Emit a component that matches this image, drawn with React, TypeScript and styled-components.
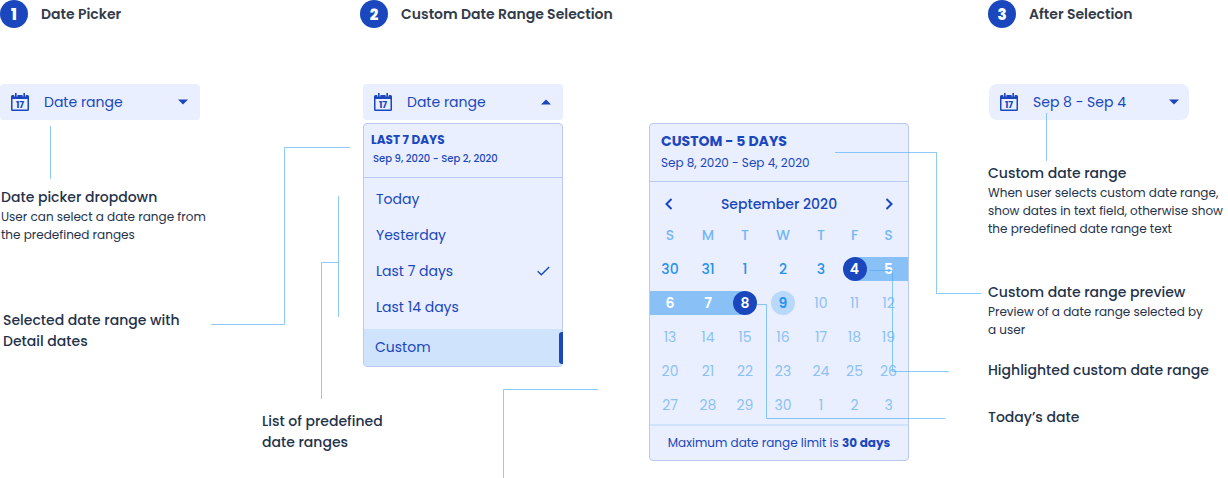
import React from "react";
import styled, { createGlobalStyle, css } from "styled-components";

const color = {
  blue: "#1a47bd",
  panel: "#e9effe",
  panelBorder: "#b9c9f3",
  active: "#cfe3fc",
  band: "#89c1f7",
  ink: "#24324a",
  heading: "#333b4a",
  line: "#42a8fa",
};

const GlobalStyle = createGlobalStyle`
  *, *::before, *::after { box-sizing: border-box; }
  body {
    margin: 0;
    background: #fff;
    color: ${color.ink};
    font-family: Poppins, Inter, "Open Sans", sans-serif;
  }
  button { font: inherit; color: inherit; border: 0; padding: 0; background: none; cursor: pointer; }
  h2, h3, p, ul { margin: 0; padding: 0; }
`;

const Page = styled.main`
  position: relative;
  display: grid;
  grid-template-columns: 360px 628px minmax(236px, 1fr);
  align-items: start;
  min-height: 100vh;
`;

const Column = styled.section`
  min-width: 0;
`;

const StepHeader = styled.header`
  display: flex;
  align-items: center;
  gap: 13px;
  height: 28px;
  margin-bottom: 56px;
`;

const StepBadge = styled.span`
  display: grid;
  place-items: center;
  width: 28px;
  height: 28px;
  border-radius: 50%;
  background: ${color.blue};
  color: #fff;
  font-size: 15px;
  font-weight: 800;
`;

const StepTitle = styled.h2`
  color: ${color.heading};
  font-size: 14px;
  font-weight: 600;
  line-height: 20px;
  white-space: nowrap;
`;

const PickerButton = styled.button<{ $round?: boolean }>`
  display: flex;
  align-items: center;
  width: 200px;
  height: 36px;
  padding: 0 ${(p) => (p.$round ? 10 : 12)}px 0 11px;
  border-radius: ${(p) => (p.$round ? 8 : 4)}px;
  background: ${color.panel};
  color: ${color.blue};
  font-size: 14px;
  text-align: left;
`;

const PickerLabel = styled.span`
  flex: 1;
  margin-left: 15px;
`;

const AppliedPicker = styled.div`
  padding-left: 1px;
`;

const Note = styled.div<{ $top: number; $indent?: number }>`
  margin-top: ${(p) => p.$top}px;
  margin-left: ${(p) => p.$indent ?? 0}px;
  white-space: pre;
`;

const NoteTitle = styled.h3`
  font-size: 14px;
  font-weight: 500;
  line-height: 21px;
`;

const NoteText = styled.p`
  font-size: 12px;
  line-height: 18px;
`;

const Demo = styled.div`
  display: flex;
  align-items: flex-start;
  gap: 86px;
  padding-left: 3px;
`;

const Dropdown = styled.div`
  width: 200px;
`;

const panel = css`
  border: 1px solid ${color.panelBorder};
  border-radius: 4px;
  background: ${color.panel};
  color: ${color.blue};
`;

const Menu = styled.div`
  ${panel}
  margin-top: 3px;
`;

const MenuSummary = styled.div`
  height: 54px;
  padding: 7px 7px 0;
  border-bottom: 1px solid ${color.panelBorder};
`;

const MenuSummaryTitle = styled.h3`
  font-size: 12px;
  font-weight: 700;
  line-height: 18px;
`;

const MenuSummaryDates = styled.p`
  padding-left: 2px;
  font-size: 10px;
  font-weight: 500;
  line-height: 20px;
`;

const OptionList = styled.ul`
  padding: 3px 0 4px;
  list-style: none;
`;

const Option = styled.button`
  display: flex;
  align-items: center;
  justify-content: space-between;
  width: 100%;
  height: 36px;
  padding: 0 12px;
  font-size: 14px;
  text-align: left;
`;

const CustomOption = styled(Option)`
  position: relative;
  height: 37px;
  padding-left: 11px;
  background: ${color.active};
  border-radius: 0 0 3px 3px;

  &::after {
    content: "";
    position: absolute;
    top: 3px;
    right: -1px;
    width: 4px;
    height: 32px;
    border-radius: 3px 0 0 3px;
    background: ${color.blue};
  }
`;

const Calendar = styled.section`
  ${panel}
  width: 260px;
  margin-top: 39px;
`;

const CalendarSummary = styled.header`
  height: 58px;
  padding: 7px 11px 0;
  border-bottom: 1px solid ${color.panelBorder};
`;

const CalendarTitle = styled.h3`
  font-size: 14px;
  font-weight: 700;
  line-height: 20px;
`;

const CalendarDates = styled.p`
  font-size: 12px;
  line-height: 24px;
`;

const MonthBar = styled.div`
  display: flex;
  align-items: center;
  justify-content: space-between;
  height: 36px;
  padding: 8px 13px 0;
  font-size: 14px;
  font-weight: 500;
`;

const MonthButton = styled.button`
  display: grid;
  place-items: center;
  width: 12px;
  height: 20px;
`;

const DayTable = styled.table`
  width: 100%;
  table-layout: fixed;
  border-collapse: collapse;
  font-size: 14px;

  th, td { height: 34px; padding: 0; }
  th { color: #76b7f6; font-weight: 500; }
`;

const DayColumn = styled.col<{ $width: number }>`
  width: ${(p) => p.$width}px;
`;

type DayKind = "muted" | "open" | "range" | "start" | "end" | "today";

const dayColor: Record<DayKind, string> = {
  muted: "#8bc1f6",
  open: "#2a91ee",
  range: "#fff",
  start: "#fff",
  end: "#fff",
  today: "#2a91ee",
};

const bandFill: Partial<Record<DayKind, string>> = {
  range: color.band,
  start: `linear-gradient(to right, transparent 50%, ${color.band} 50%)`,
  end: `linear-gradient(to left, transparent 50%, ${color.band} 50%)`,
};

const dotFill: Partial<Record<DayKind, string>> = {
  start: color.blue,
  end: color.blue,
  today: "#b9d9fb",
};

const DayButton = styled.button<{ $kind: DayKind }>`
  display: flex;
  justify-content: center;
  width: 100%;
  height: 24px;
  background: ${(p) => bandFill[p.$kind] ?? "none"};
  color: ${(p) => dayColor[p.$kind]};
  font-weight: ${(p) => (p.$kind === "muted" ? 400 : p.$kind === "open" ? 500 : 600)};
`;

const DayNumber = styled.span<{ $kind: DayKind }>`
  display: grid;
  place-items: center;
  width: 24px;
  height: 24px;
  border-radius: 50%;
  background: ${(p) => dotFill[p.$kind] ?? "none"};
`;

const CalendarFooter = styled.footer`
  height: 36px;
  margin-top: 2px;
  border-top: 2px solid ${color.active};
  font-size: 12px;
  line-height: 34px;
  text-align: center;

  strong { font-weight: 700; }
`;

const Connectors = styled.svg`
  position: absolute;
  top: 0;
  left: 0;
  pointer-events: none;
`;

const CalendarIcon = () => (
  <svg width="18" height="18" viewBox="0 0 18 18" fill="none" aria-hidden="true">
    <path
      fill={color.blue}
      fillRule="evenodd"
      d="M1.500 2H3.200V3.600H6.400V2H11.600V3.600H14.800V2H16.500Q18 2 18 3.500V16.500Q18 18 16.500 18H1.500Q0 18 0 16.500V3.500Q0 2 1.500 2ZM1.500 6V16.500H16.500V6Z"
    />
    <path stroke={color.blue} strokeWidth="1.600" d="M4.800 0V4M13.200 0V4" />
    <text x="9" y="14.500" fill={color.blue} fontSize="9" fontWeight="700" textAnchor="middle">
      17
    </text>
  </svg>
);

const Caret = ({ up = false }: { up?: boolean }) => (
  <svg width="10" height="6" viewBox="0 0 10 6" aria-hidden="true">
    <path fill={color.blue} d={up ? "M0 5.500 5 .5l5 5Z" : "M0 .5h10l-5 5Z"} />
  </svg>
);

const Check = () => (
  <svg width="13" height="10" viewBox="0 0 13 10" fill="none" aria-hidden="true">
    <path stroke={color.blue} strokeWidth="1.400" d="M.7 5.200 4.300 8.800 12.200.9" />
  </svg>
);

const Chevron = ({ right = false }: { right?: boolean }) => (
  <svg width="8" height="12" viewBox="0 0 8 12" fill="none" aria-hidden="true">
    <path stroke={color.blue} strokeWidth="2" d={right ? "M1.500 1l5 5-5 5" : "M6.500 1l-5 5 5 5"} />
  </svg>
);

const Step = ({ n, title }: { n: number; title: string }) => (
  <StepHeader>
    <StepBadge>{n}</StepBadge>
    <StepTitle>{title}</StepTitle>
  </StepHeader>
);

const Picker = ({ label, open, round }: { label: string; open?: boolean; round?: boolean }) => (
  <PickerButton type="button" aria-haspopup="listbox" aria-expanded={!!open} $round={round}>
    <CalendarIcon />
    <PickerLabel>{label}</PickerLabel>
    <Caret up={open} />
  </PickerButton>
);

const columnWidths = [40, 36, 38, 38, 38, 29, 39];
const weekdays = ["S", "M", "T", "W", "T", "F", "S"];
const weeks = [
  [30, 31, 1, 2, 3, 4, 5],
  [6, 7, 8, 9, 10, 11, 12],
  [13, 14, 15, 16, 17, 18, 19],
  [20, 21, 22, 23, 24, 25, 26],
  [27, 28, 29, 30, 1, 2, 3],
];

const kindOf = (week: number, day: number): DayKind => {
  const i = week * 7 + day;
  if (i < 5) return "open";
  if (i === 5) return "start";
  if (i < 9) return "range";
  if (i === 9) return "end";
  return i === 10 ? "today" : "muted";
};

const presets = ["Today", "Yesterday", "Last 7 days", "Last 14 days"];

export default function App() {
  return (
    <>
      <GlobalStyle />
      <Page>
        <Column>
          <Step n={1} title="Date Picker" />
          <Picker label="Date range" />
          <Note $top={67} $indent={1}>
            <NoteTitle>Date picker dropdown</NoteTitle>
            <NoteText>{"User can select a date range from\nthe predefined ranges"}</NoteText>
          </Note>
          <Note $top={66} $indent={3}>
            <NoteTitle>{"Selected date range with\nDetail dates"}</NoteTitle>
          </Note>
          <Note $top={59} $indent={262}>
            <NoteTitle>{"List of predefined\ndate ranges"}</NoteTitle>
          </Note>
        </Column>

        <Column>
          <Step n={2} title="Custom Date Range Selection" />
          <Demo>
            <Dropdown>
              <Picker label="Date range" open />
              <Menu>
                <MenuSummary>
                  <MenuSummaryTitle>LAST 7 DAYS</MenuSummaryTitle>
                  <MenuSummaryDates>Sep 9, 2020 - Sep 2, 2020</MenuSummaryDates>
                </MenuSummary>
                <OptionList>
                  {presets.map((name) => (
                    <li key={name}>
                      <Option type="button">
                        {name}
                        {name === "Last 7 days" && <Check />}
                      </Option>
                    </li>
                  ))}
                </OptionList>
                <CustomOption type="button">Custom</CustomOption>
              </Menu>
            </Dropdown>

            <Calendar>
              <CalendarSummary>
                <CalendarTitle>CUSTOM - 5 DAYS</CalendarTitle>
                <CalendarDates>Sep 8, 2020 - Sep 4, 2020</CalendarDates>
              </CalendarSummary>
              <MonthBar>
                <MonthButton type="button" aria-label="Previous month">
                  <Chevron />
                </MonthButton>
                <span>September 2020</span>
                <MonthButton type="button" aria-label="Next month">
                  <Chevron right />
                </MonthButton>
              </MonthBar>
              <DayTable>
                <colgroup>
                  {columnWidths.map((w, i) => (
                    <DayColumn key={i} $width={w} />
                  ))}
                </colgroup>
                <thead>
                  <tr>
                    {weekdays.map((d, i) => (
                      <th key={i} scope="col">{d}</th>
                    ))}
                  </tr>
                </thead>
                <tbody>
                  {weeks.map((days, w) => (
                    <tr key={w}>
                      {days.map((d, i) => (
                        <td key={i}>
                          <DayButton type="button" $kind={kindOf(w, i)}>
                            <DayNumber $kind={kindOf(w, i)}>{d}</DayNumber>
                          </DayButton>
                        </td>
                      ))}
                    </tr>
                  ))}
                </tbody>
              </DayTable>
              <CalendarFooter>
                Maximum date range limit is <strong>30 days</strong>
              </CalendarFooter>
            </Calendar>
          </Demo>
        </Column>

        <Column>
          <Step n={3} title="After Selection" />
          <AppliedPicker>
            <Picker label="Sep 8 - Sep 4" round />
          </AppliedPicker>
          <Note $top={43}>
            <NoteTitle>Custom date range</NoteTitle>
            <NoteText>
              {"When user selects custom date range,\nshow dates in text field, otherwise show\nthe predefined date range text"}
            </NoteText>
          </Note>
          <Note $top={44}>
            <NoteTitle>Custom date range preview</NoteTitle>
            <NoteText>{"Preview of a date range selected by\na user"}</NoteText>
          </Note>
          <Note $top={21}>
            <NoteTitle>Highlighted custom date range</NoteTitle>
          </Note>
          <Note $top={26}>
            <NoteTitle>Today’s date</NoteTitle>
          </Note>
        </Column>

        <Connectors
          width="988"
          height="478"
          overflow="visible"
          fill="none"
          stroke={color.line}
          strokeOpacity=".6"
          aria-hidden="true"
        >
          <path d="M50.500 126V179" />
          <path d="M211 324.500H284.500V147.500H350" />
          <path d="M338.500 196V317M338.500 262.500H321.500V399" />
          <path d="M503.500 478V389.500H598" />
          <path d="M835 152.500H936.500V293.500H981" />
          <path d="M870 270.500H892.500V371.500H949" />
          <path d="M757 304.500H766.500V418.500H945" />
          <path d="M1046.500 113V161" />
        </Connectors>
      </Page>
    </>
  );
}
